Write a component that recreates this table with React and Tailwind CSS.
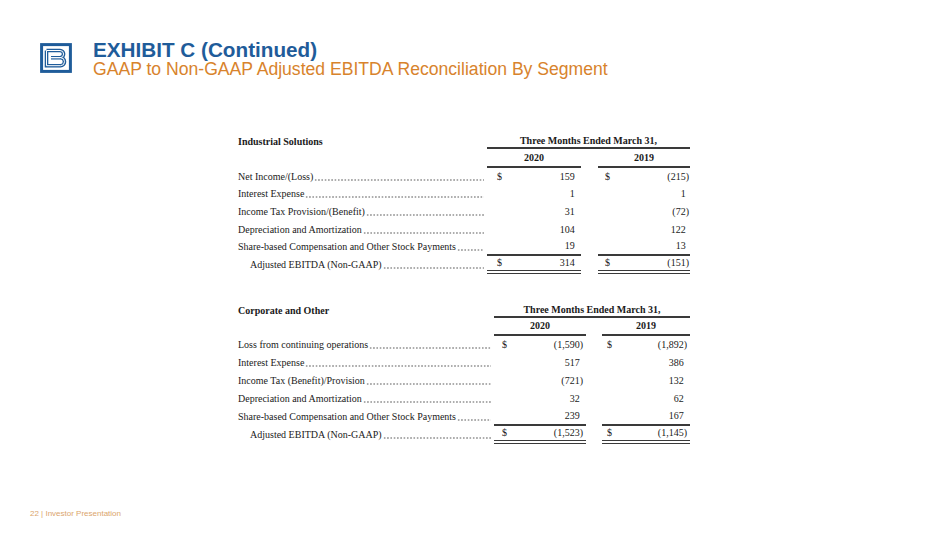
const industrial = [
  ["Net Income/(Loss)", "$", "159", "$", "(215)"],
  ["Interest Expense", "", "1", "", "1"],
  ["Income Tax Provision/(Benefit)", "", "31", "", "(72)"],
  ["Depreciation and Amortization", "", "104", "", "122"],
  ["Share-based Compensation and Other Stock Payments", "", "19", "", "13"],
  ["Adjusted EBITDA (Non-GAAP)", "$", "314", "$", "(151)"],
];

const corporate = [
  ["Loss from continuing operations", "$", "(1,590)", "$", "(1,892)"],
  ["Interest Expense", "", "517", "", "386"],
  ["Income Tax (Benefit)/Provision", "", "(721)", "", "132"],
  ["Depreciation and Amortization", "", "32", "", "62"],
  ["Share-based Compensation and Other Stock Payments", "", "239", "", "167"],
  ["Adjusted EBITDA (Non-GAAP)", "$", "(1,523)", "$", "(1,145)"],
];

function Logo() {
  const b = "M6.5 7.5 H20 a3.6 3.6 0 0 1 0 7.2 H11 M11 14.7 H20.5 a4 4 0 0 1 0 8 H6.5 V7.5";
  return (
    <svg width="32" height="30" viewBox="0 0 32 30" className="shrink-0">
      <rect x="1.6" y="1.6" width="28.8" height="26.8" fill="none" stroke="#1f5c9a" strokeWidth="3" />
      <path d={b} fill="none" stroke="#1f5c9a" strokeWidth="3.6" />
      <path d={b} fill="none" stroke="#ffffff" strokeWidth="1" />
    </svg>
  );
}

function Label({ text, indent }) {
  return (
    <div className={indent ? "flex items-center whitespace-nowrap pl-[12px]" : "flex items-center whitespace-nowrap"}>
      <span className="shrink-0">{text}</span>
      {/* dot leader */}
      <span className="mr-[3px] ml-[1px] mt-[6px] h-[2px] min-w-0 flex-1 bg-[radial-gradient(circle,#444_0.45px,transparent_0.8px)] bg-[length:3.3px_2px] bg-repeat-x" />
    </div>
  );
}

function Amount({ sign, value, className }) {
  const paren = value.endsWith(")");
  return (
    <div className={"flex items-center justify-between " + className}>
      <span>{sign}</span>
      <span>
        {value}
        {!paren && <span className="invisible">)</span>}
      </span>
    </div>
  );
}

function Table({ title, rows, cols, rowH, yearH, c1, c2 }) {
  return (
    <div className="ml-[238px] w-[452px] font-['Liberation_Serif',serif] text-[10px] leading-none text-[#1a1a1a]">
      <div className={"grid h-[15px] " + cols}>
        <div className="pt-[3px] font-bold">{title}</div>
        <div className="col-span-3 border-b-[2px] border-[#3a3a3a] pt-[2px] text-center font-bold">Three Months Ended March 31,</div>
      </div>
      <div className={"grid " + cols + " " + yearH}>
        <div />
        <div className="flex items-center justify-center border-b-[2px] border-[#3a3a3a] font-bold">2020</div>
        <div />
        <div className="flex items-center justify-center border-b-[2px] border-[#3a3a3a] font-bold">2019</div>
      </div>
      {rows.map((r, i) => {
        const last = i === rows.length - 1;
        const beforeLast = i === rows.length - 2;
        const line = last
          ? " border-b-[4px] border-double border-[#3a3a3a]"
          : beforeLast
          ? " border-b-[2px] border-[#3a3a3a]"
          : "";
        return (
          <div key={r[0]} className={"grid " + cols + " " + rowH}>
            <Label text={r[0]} indent={last} />
            <Amount sign={r[1]} value={r[2]} className={c1 + line} />
            <div />
            <Amount sign={r[3]} value={r[4]} className={c2 + line} />
          </div>
        );
      })}
    </div>
  );
}

export default function App() {
  return (
    <div className="flex h-[534px] w-[950px] flex-col overflow-hidden bg-white font-['Liberation_Sans',Arial,sans-serif]">
      <div className="flex h-[134px] gap-[21px] pl-[40px] pt-[40px]">
        <div className="pt-[3px]">
          <Logo />
        </div>
        <div>
          <h1 className="text-[20.7px] font-bold leading-[20px] text-[#1f5c9a]">EXHIBIT C (Continued)</h1>
          <h2 className="text-[17.6px] leading-[18px] text-[#d8832c]">
            GAAP to Non-GAAP Adjusted EBITDA Reconciliation By Segment
          </h2>
        </div>
      </div>

      <Table
        title="Industrial Solutions"
        rows={industrial}
        cols="grid-cols-[249px_94px_17px_92px]"
        rowH="h-[17.6px]"
        yearH="h-[19px]"
        c1="pl-[10px] pr-[3px]"
        c2="pl-[7px] pr-[1px]"
      />

      <div className="h-[29px]" />

      <Table
        title="Corporate and Other"
        rows={corporate}
        cols="grid-cols-[256px_92px_16px_88px]"
        rowH="h-[18px]"
        yearH="h-[18px]"
        c1="pl-[8px] pr-[3px]"
        c2="pl-[5px] pr-[3px]"
      />

      <div className="mt-auto pb-[15px] pl-[30px] text-[8px] leading-[10px] text-[#dba56c]">
        22 | Investor Presentation
      </div>
    </div>
  );
}
